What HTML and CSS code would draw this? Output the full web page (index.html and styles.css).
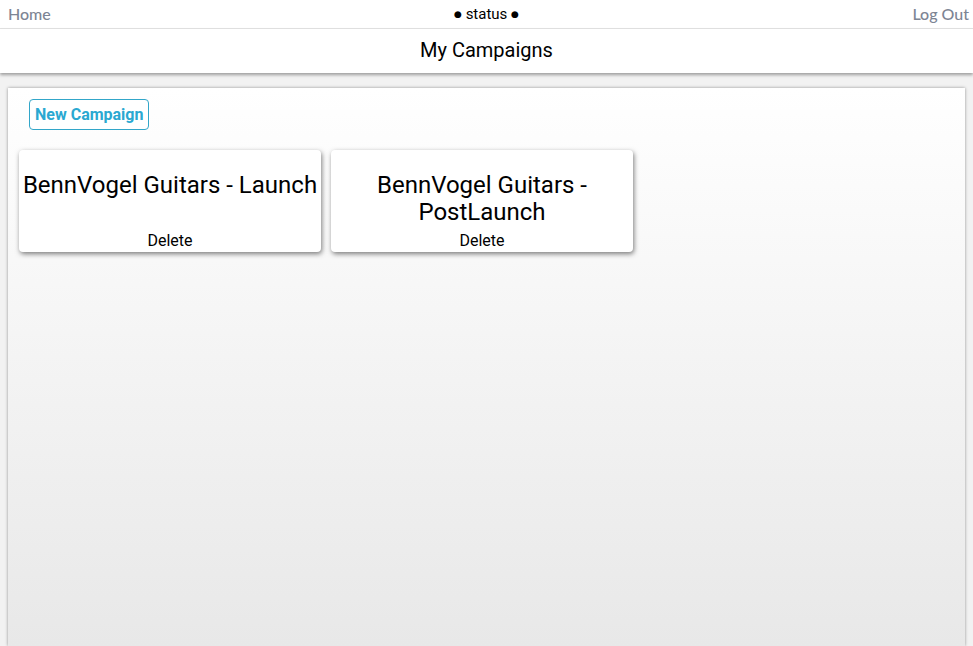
FILE: index.html
```html
<!DOCTYPE html>
<html>
<head>
<meta charset="utf-8">
<link rel="stylesheet" href="styles.css">
</head>
<body>
<div class="topbar">
  <a class="nav-link">Home</a>
  <span class="status"><span class="dot">●</span> status <span class="dot">●</span></span>
  <a class="nav-link">Log Out</a>
</div>
<header class="header">My Campaigns</header>
<main class="panel">
  <div class="toolbar">
    <button class="new-btn">New Campaign</button>
  </div>
  <div class="cards">
    <div class="card">
      <div class="card-title">BennVogel Guitars - Launch</div>
      <div class="card-delete">Delete</div>
    </div>
    <div class="card">
      <div class="card-title">BennVogel Guitars - PostLaunch</div>
      <div class="card-delete">Delete</div>
    </div>
  </div>
</main>
</body>
</html>
```
FILE: styles.css
```css
* { box-sizing: border-box; }
html, body { margin: 0; padding: 0; }
body {
  background: #f2f2f2;
  font-family: Roboto, "Liberation Sans", sans-serif;
  color: #000;
  height: 646px;
  overflow: hidden;
  display: flex;
  flex-direction: column;
}
.topbar {
  height: 29px;
  flex: none;
  background: #fff;
  border-bottom: 1px solid #e3e3e3;
  display: flex;
  align-items: center;
  justify-content: space-between;
  padding: 0 4px 1px 8px;
  position: relative;
}
.nav-link {
  font-family: Lato, "Liberation Sans", sans-serif;
  font-size: 16px;
  color: #7d8594;
  font-weight: 500;
}
.status {
  font-size: 15px;
  position: absolute;
  left: 0; right: 0;
  text-align: center;
  top: 5px;
}
.dot {
  font-family: "DejaVu Sans", sans-serif;
  font-size: 9px;
  vertical-align: 2px;
}
.header {
  height: 44px;
  flex: none;
  background: #fff;
  display: flex;
  align-items: center;
  justify-content: center;
  font-size: 20px;
  box-shadow: 0 2px 3px rgba(0,0,0,0.35);
  position: relative;
  z-index: 1;
  padding-bottom: 2px;
}
.panel {
  flex: 1;
  margin: 15px 8px 0 8px;
  background: linear-gradient(#ffffff 0%, #f7f7f7 35%, #e8e8e8 100%);
  box-shadow: 0 0 3px rgba(0,0,0,0.4);
  padding: 11px 11px 10px;
}
.toolbar { padding-left: 10px; }
.new-btn {
  font-family: Roboto, "Liberation Sans", sans-serif;
  font-weight: 700;
  font-size: 16px;
  color: #2aa8d1;
  background: #fff;
  border: 1px solid #32a6c9;
  border-radius: 4px;
  height: 31px;
  padding: 0 5px;
}
.cards {
  display: flex;
  gap: 10px;
  margin-top: 20px;
}
.card {
  width: 302px;
  height: 102px;
  background: #fff;
  border-radius: 4px;
  box-shadow: 1px 2px 5px rgba(0,0,0,0.5);
  display: flex;
  flex-direction: column;
  align-items: center;
  padding: 22px 3px 2px;
}
.card-title {
  flex: 1;
  font-size: 24px;
  line-height: 27px;
  text-align: center;
}
.card-delete {
  font-size: 16px;
  line-height: 18px;
}
```
